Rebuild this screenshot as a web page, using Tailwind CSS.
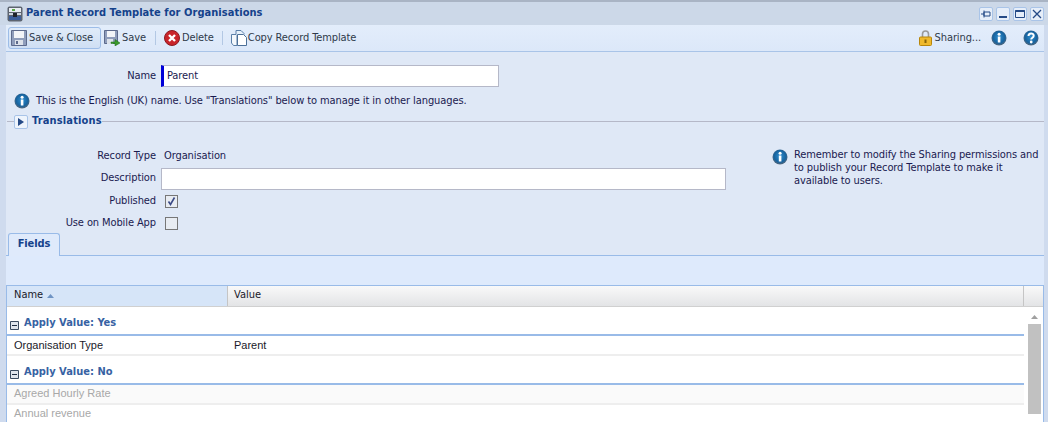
<!DOCTYPE html>
<html lang="en">
  <head>
    <meta charset="UTF-8" />
    <title>Parent Record Template for Organisations</title>
    <script src="https://cdn.jsdelivr.net/npm/@tailwindcss/browser@4"></script>
  </head>
  <body class="h-[422px] w-[1048px] overflow-hidden bg-[#cfdbee] font-['DejaVu_Sans_Condensed','DejaVu_Sans',sans-serif] text-[11px] tracking-[-0.1px] text-[#1a1a50]">
    <!-- title bar -->
    <div class="flex h-[25px] items-center border-t-2 border-[#a9b4c4] bg-[#ccd8e8] pl-[7px] pr-[4px]">
      <svg class="h-[16px] w-[16px]" viewBox="0 0 16 16">
        <defs>
          <radialGradient id="shine" cx="50%" cy="45%" r="55%">
            <stop offset="0%" stop-color="#2f8fd0" />
            <stop offset="70%" stop-color="#17639f" />
            <stop offset="100%" stop-color="#56687a" />
          </radialGradient>
        </defs>
        <rect x="0.5" y="0.5" width="15" height="15" rx="2" fill="#5d6470" />
        <rect x="2" y="2" width="12" height="4" fill="#e8edf3" />
        <rect x="5" y="3" width="3" height="2" fill="#5aa845" />
        <rect x="2" y="7" width="12" height="2" fill="#cfd6df" />
        <rect x="2" y="10" width="12" height="4" fill="#3d5f9a" />
        <rect x="6" y="7" width="4" height="4" fill="#20242c" />
      </svg>
      <span class="ml-[3px] text-[11px] font-bold tracking-[0.05px] text-[#15428b]">Parent Record Template for Organisations</span>
      <div class="ml-auto flex gap-[3px]">
        <button class="flex h-[14px] w-[14px] items-center justify-center rounded-[2px] border border-[#a9c4e8] bg-[#e6eef9]">
          <svg class="h-[10px] w-[10px]" viewBox="0 0 10 10"><path d="M0 5h3M3 3h6v4H3zM3 1.500v7" fill="none" stroke="#254a86" /></svg>
        </button>
        <button class="flex h-[14px] w-[14px] items-center justify-center rounded-[2px] border border-[#a9c4e8] bg-[#e6eef9]">
          <svg class="h-[10px] w-[10px]" viewBox="0 0 10 10"><path d="M1 8h8" stroke="#254a86" stroke-width="2" /></svg>
        </button>
        <button class="flex h-[14px] w-[14px] items-center justify-center rounded-[2px] border border-[#a9c4e8] bg-[#e6eef9]">
          <svg class="h-[10px] w-[10px]" viewBox="0 0 10 10"><path d="M.5 1.500h9v7h-9z" fill="none" stroke="#254a86" /><path d="M.5 2h9" stroke="#254a86" stroke-width="2" /></svg>
        </button>
        <button class="flex h-[14px] w-[14px] items-center justify-center rounded-[2px] border border-[#a9c4e8] bg-[#e6eef9]">
          <svg class="h-[10px] w-[10px]" viewBox="0 0 10 10"><path d="M1 1l8 8M9 1l-8 8" stroke="#254a86" stroke-width="1.300" /></svg>
        </button>
      </div>
    </div>

    <div class="ml-[6px] mr-[4px] flex h-[397px] flex-col overflow-hidden bg-[#dfe8f6]">
      <!-- toolbar -->
      <div class="flex h-[27px] shrink-0 items-center border-b border-[#a9c4e8] bg-linear-to-b from-[#e3edfb] to-[#dce8f9] pl-[2px] pr-[5px] text-[#2f3a4a]">
        <button class="flex h-[22px] w-[93px] items-center rounded-[3px] border border-[#9dbde8] bg-linear-to-b from-[#e0ebf9] to-[#cfdff4] pl-[2px] text-[11px]">
          <svg class="h-[16px] w-[16px]" viewBox="0 0 16 16">
            <path d="M.5.5h15v15H.5z" fill="#8f9dbb" stroke="#5d6a8c" />
            <rect x="3" y="1" width="10" height="7" fill="#f2f4f8" />
            <rect x="4" y="10" width="8" height="5" fill="#dde2ea" />
            <rect x="5" y="11" width="2" height="3" fill="#5d6a8c" />
          </svg>
          <span class="ml-[2px]">Save &amp; Close</span>
        </button>
        <button class="ml-[3px] flex items-center">
          <svg class="h-[16px] w-[16px]" viewBox="0 0 16 16">
            <path d="M.5.5h13v13H.5z" fill="#8f9dbb" stroke="#5d6a8c" />
            <rect x="3" y="1" width="8" height="6" fill="#f2f4f8" />
            <rect x="3" y="9" width="6" height="5" fill="#dde2ea" />
            <path d="M7 12h4V9.500l5 3.500-5 3v-2.500H7z" fill="#3a9a2a" stroke="#1f6b18" stroke-width=".5" />
          </svg>
          <span class="ml-[2px]">Save</span>
        </button>
        <div class="ml-[9px] h-[14px] w-px bg-[#b3c8e4]"></div>
        <button class="ml-[8px] flex items-center">
          <svg class="h-[16px] w-[16px]" viewBox="0 0 16 16">
            <circle cx="8" cy="8" r="7.500" fill="#c9252b" stroke="#8c1a20" />
            <path d="M5 5l6 6M11 5l-6 6" stroke="#fff" stroke-width="2.400" />
          </svg>
          <span class="ml-[2px]">Delete</span>
        </button>
        <div class="ml-[8px] h-[14px] w-px bg-[#b3c8e4]"></div>
        <button class="ml-[8px] flex items-center">
          <svg class="h-[16px] w-[16px]" viewBox="0 0 16 16">
            <path d="M5 4V.5h5l3 3v1" fill="#e6f0fa" stroke="#5b7fa8" />
            <path d="M.5 4.500H5l1 1v10H2.500L.5 13z" fill="#f4f8fc" stroke="#5b7fa8" />
            <path d="M6.500 4.500h6l3 3v8h-9z" fill="#fff" stroke="#4d7098" />
          </svg>
          <span class="ml-[1px]">Copy Record Template</span>
        </button>
        <button class="ml-auto flex items-center">
          <svg class="h-[16px] w-[13px]" viewBox="0 0 13 16">
            <path d="M3.500 8V4a3 3 0 0 1 6 0v4" fill="none" stroke="#9a9a9a" stroke-width="1.600" />
            <rect x="0.500" y="7" width="12" height="8.500" rx="1" fill="#efb92c" stroke="#b8860b" />
            <rect x="5.500" y="9.500" width="2" height="3.500" fill="#8a6508" />
          </svg>
          <span class="ml-[3px]">Sharing...</span>
        </button>
        <svg class="ml-[10px] h-[16px] w-[16px]" viewBox="0 0 16 16">
          <circle cx="8" cy="8" r="7.500" fill="url(#shine)" />
          <rect x="6.800" y="6.500" width="2.600" height="6" fill="#fff" />
          <circle cx="8.100" cy="4.300" r="1.500" fill="#fff" />
        </svg>
        <svg class="ml-[16px] h-[16px] w-[16px]" viewBox="0 0 16 16">
          <circle cx="8" cy="8" r="7.500" fill="url(#shine)" />
          <path d="M5.500 6c0-3.300 5.200-3.300 5.200-.2 0 2-2.500 1.800-2.500 3.700" fill="none" stroke="#fff" stroke-width="2" />
          <circle cx="8.200" cy="12" r="1.400" fill="#fff" />
        </svg>
      </div>

      <!-- name -->
      <div class="mt-[13px] flex h-[22px] items-center">
        <label class="w-[150px] text-right">Name</label>
        <div class="ml-[5px] flex h-[22px] w-[338px] items-center border border-l-[3px] border-[#b5b8c8] border-l-[#0000d8] bg-white pl-[3px] text-[11px]">Parent</div>
      </div>
      <div class="mt-[6px] flex h-[18px] items-center pl-[8px]">
        <svg class="h-[16px] w-[16px]" viewBox="0 0 16 16">
          <circle cx="8" cy="8" r="7.500" fill="url(#shine)" />
          <rect x="6.800" y="6.500" width="2.600" height="6" fill="#fff" />
          <circle cx="8.100" cy="4.300" r="1.500" fill="#fff" />
        </svg>
        <span class="ml-[6px]">This is the English (UK) name. Use "Translations" below to manage it in other languages.</span>
      </div>

      <!-- translations fieldset -->
      <div class="mt-[4px] flex h-[16px] items-center pl-px">
        <div class="h-px w-[7px] bg-[#b5b8c8]"></div>
        <button class="flex h-[14px] w-[14px] items-center justify-center rounded-[2px] border border-[#a9c4e8] bg-[#eef4fc]">
          <svg class="h-[8px] w-[6px]" viewBox="0 0 6 8"><path d="M0 0l6 4-6 4z" fill="#254a86" /></svg>
        </button>
        <span class="ml-[4px] text-[11px] font-bold tracking-[0.15px] text-[#15428b]">Translations</span>
        <div class="h-px flex-1 bg-[#b5b8c8]"></div>
      </div>

      <!-- details -->
      <div class="mt-[16px] flex">
        <div class="w-[766px]">
          <div class="flex h-[22px] items-center">
            <label class="w-[150px] text-right">Record Type</label>
            <span class="ml-[8px]">Organisation</span>
          </div>
          <div class="flex h-[22px] items-center">
            <label class="w-[150px] text-right">Description</label>
            <div class="ml-[5px] h-[22px] w-[565px] border border-[#b5b8c8] bg-white"></div>
          </div>
          <div class="mt-[1px] flex h-[22px] items-center">
            <label class="w-[150px] text-right">Published</label>
            <div class="ml-[9px] flex h-[13px] w-[13px] items-center justify-center border border-[#777] bg-[#e8ecf2]">
              <svg class="h-[11px] w-[11px]" viewBox="0 0 11 11"><path d="M2.500 5.500l2 3 4-7" fill="none" stroke="#3b4a86" stroke-width="1.600" /></svg>
            </div>
          </div>
          <div class="flex h-[22px] items-center">
            <label class="w-[150px] text-right">Use on Mobile App</label>
            <div class="ml-[9px] h-[13px] w-[13px] border border-[#777] bg-[#e8ecf2]"></div>
          </div>
        </div>
        <div class="flex">
          <svg class="mt-[3px] h-[16px] w-[16px] shrink-0" viewBox="0 0 16 16">
            <circle cx="8" cy="8" r="7.500" fill="url(#shine)" />
            <rect x="6.800" y="6.500" width="2.600" height="6" fill="#fff" />
            <circle cx="8.100" cy="4.300" r="1.500" fill="#fff" />
          </svg>
          <p class="ml-[6px] w-[250px] pt-[2px] leading-[13px]">Remember to modify the Sharing permissions and to publish your Record Template to make it available to users.</p>
        </div>
      </div>

      <!-- tabs -->
      <div class="-mt-[2px] flex h-[23px] shrink-0 border-b border-[#99bbe8] pl-[2px]">
        <div class="flex h-[23px] w-[52px] items-center justify-center rounded-t-[3px] border border-b-0 border-[#99bbe8] bg-[#dfeafb] font-bold text-[#15428b]">Fields</div>
      </div>
      <div class="h-[30px] shrink-0 border-b border-[#99bbe8] bg-[#deeafc]"></div>

      <!-- grid -->
      <div class="flex-1 border-x border-[#99bbe8] bg-white font-['Liberation_Sans',sans-serif] tracking-normal text-[#1a1a2a]">
        <div class="flex h-[21px] border-b border-[#d0d0d0] bg-linear-to-b from-[#f9f9f9] to-[#e3e4e6]">
          <div class="flex w-[221px] items-center border-r border-[#c5c5c5] bg-[#d6e5f8] pl-[7px] font-['DejaVu_Sans_Condensed','DejaVu_Sans',sans-serif]">Name
            <svg class="ml-[4px] h-[4px] w-[7px]" viewBox="0 0 7 4"><path d="M0 4l3.500-4 3.500 4z" fill="#6f94c4" /></svg>
          </div>
          <div class="flex w-[796px] items-center border-r border-[#c5c5c5] pl-[6px] font-['DejaVu_Sans_Condensed','DejaVu_Sans',sans-serif]">Value</div>
        </div>
        <div class="flex">
          <div class="w-[1017px]">
            <div class="flex h-[29px] items-end border-b-2 border-[#99bbe8] pb-[2px] pl-[3px]">
              <svg class="mb-[2px] h-[9px] w-[9px]" viewBox="0 0 9 9"><path d="M.5.5h8v8h-8z" fill="#dfe4ec" stroke="#3a4a60" /><path d="M2 4.500h5" stroke="#1c2a40" /></svg>
              <span class="ml-[5px] font-['DejaVu_Sans_Condensed','DejaVu_Sans',sans-serif] text-[11px] font-bold text-[#3762a3]">Apply Value: Yes</span>
            </div>
            <div class="flex h-[20px] items-center border-b-2 border-[#eeeeee] pl-[7px] pt-px">
              <span class="w-[220px]">Organisation Type</span><span>Parent</span>
            </div>
            <div class="flex h-[29px] items-end border-b-2 border-[#99bbe8] pb-[2px] pl-[3px]">
              <svg class="mb-[2px] h-[9px] w-[9px]" viewBox="0 0 9 9"><path d="M.5.5h8v8h-8z" fill="#dfe4ec" stroke="#3a4a60" /><path d="M2 4.500h5" stroke="#1c2a40" /></svg>
              <span class="ml-[5px] font-['DejaVu_Sans_Condensed','DejaVu_Sans',sans-serif] text-[11px] font-bold text-[#3762a3]">Apply Value: No</span>
            </div>
            <div class="flex h-[20px] items-center border-b-2 border-[#eeeeee] bg-[#fafafa] pl-[7px] font-medium text-[#a8a8a8]">Agreed Hourly Rate</div>
            <div class="flex h-[18px] items-center pl-[7px] font-medium text-[#a8a8a8]">Annual revenue</div>
          </div>
          <div class="flex flex-1 flex-col items-center pl-[1px]">
            <svg class="mt-[8px] h-[4px] w-[7px]" viewBox="0 0 7 4"><path d="M0 4l3.500-4 3.500 4z" fill="#a0a0a0" /></svg>
            <div class="mt-[5px] h-[90px] w-[13px] bg-[#c1c1c1]"></div>
          </div>
        </div>
      </div>
    </div>
  </body>
</html>
